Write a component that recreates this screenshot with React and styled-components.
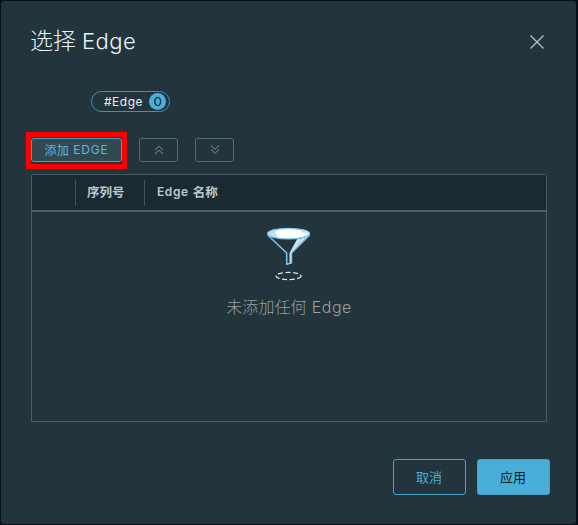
import React from "react";
import styled, { createGlobalStyle } from "styled-components";

const GlobalStyle = createGlobalStyle`
  * { box-sizing: border-box; }
  body {
    margin: 0;
    background: #080f19;
    font-family: Inter, "Noto Sans CJK SC", sans-serif;
  }
  button { font-family: inherit; padding: 0; margin: 0; background: none; border: 0; }
`;

const Backdrop = styled.div`
  height: 525px;
  padding: 1px 2px 1px 1px;
  overflow: hidden;
`;

const Dialog = styled.section`
  height: 523px;
  padding: 24px 27px 0 29px;
  display: flex;
  flex-direction: column;
  background: #22343c;
  border-radius: 3px;
`;

const Header = styled.header`
  display: flex;
  justify-content: space-between;
  height: 66px;
`;

const Title = styled.h1`
  margin: 0;
  display: flex;
  gap: 6px;
  height: 33px;
  font-size: 23px;
  line-height: 33px;
  font-weight: 300;
  color: #eaf4f8;
  white-space: nowrap;
`;

const Latin = styled.span`
  font-size: ${(p) => p.$size}px;
  letter-spacing: ${(p) => p.$spacing || 0}px;
`;

const CloseButton = styled.button`
  width: 24px;
  height: 33px;
  display: grid;
  place-items: center;
  color: #b3c1c9;
`;

const Filter = styled.div`
  margin-left: 61px;
  width: 79px;
  height: 21px;
  padding: 0 3px 0 12px;
  display: flex;
  align-items: center;
  justify-content: space-between;
  border: 1px solid #4092b3;
  border-radius: 11px;
  color: #e6f0f4;
  font-size: 12px;
  letter-spacing: 0.5px;
`;

const FilterLabel = styled.span`
  padding-bottom: 1px;
`;

const Badge = styled.span`
  width: 17px;
  height: 17px;
  border-radius: 50%;
  display: grid;
  place-items: center;
  background: #49afd9;
`;

const BadgeCount = styled.span`
  color: #102029;
  font-size: 12px;
  line-height: 17px;
  letter-spacing: 0;
  transform: scaleX(1.12);
`;

const Toolbar = styled.div`
  display: flex;
  align-items: flex-start;
  height: 37px;
  margin: 20px 0 0 -4px;
`;

const Highlight = styled.div`
  width: 101px;
  height: 37px;
  border: 5px solid #ff0000;
  padding-top: 1px;
`;

const AddButton = styled.button`
  width: 91px;
  height: 24px;
  padding-bottom: 1px;
  display: flex;
  align-items: center;
  justify-content: center;
  gap: 4px;
  border: 1px solid #4a9fc2;
  border-radius: 3px;
  background: #324852;
  color: #57b9e0;
  font-size: 12px;
  letter-spacing: 0.3px;
  white-space: nowrap;
`;

const MoveButton = styled.button`
  width: 39px;
  height: 24px;
  margin: 6px 0 0 ${(p) => p.$gap}px;
  display: grid;
  place-items: center;
  border: 1px solid #566a73;
  border-radius: 3px;
  color: #62757e;
`;

const Grid = styled.div`
  width: 516px;
  height: 248px;
  margin: 5px 0 0 1px;
  border: 1px solid #495b64;
  border-radius: 2px 2px 0 0;
`;

const GridHeader = styled.div`
  display: grid;
  grid-template-columns: 44px 69px 1fr;
  align-items: center;
  height: 37px;
  background: #1b2a32;
  border-bottom: 2px solid #4c5f68;
`;

const HeaderCell = styled.div`
  height: 26px;
  padding: 0 0 2px ${(p) => (p.$last ? 12 : 11)}px;
  display: flex;
  align-items: center;
  gap: 4px;
  border-right: ${(p) => (p.$last ? "0" : "1px solid #43545d")};
  color: #b9c9d1;
  font-size: 12.5px;
  font-weight: 600;
  white-space: nowrap;
`;

const EmptyState = styled.div`
  display: flex;
  flex-direction: column;
  align-items: center;
  padding-top: 15px;
`;

const EmptyText = styled.p`
  display: flex;
  align-items: center;
  gap: 5px;
  height: 24px;
  margin: 14px 0 0;
  line-height: 24px;
  font-size: 16px;
  font-weight: 300;
  letter-spacing: 0.1px;
  color: #9a9fa2;
`;

const Footer = styled.footer`
  display: flex;
  justify-content: flex-end;
  gap: 11px;
  margin: 37px -1px 0 0;
`;

const ActionButton = styled.button`
  width: 73px;
  height: 36px;
  padding: 0 1px 2px 0;
  display: grid;
  place-items: center;
  border: 1px solid #4a9fc2;
  border-radius: 3px;
  background: ${(p) => (p.$primary ? "#49afd9" : "transparent")};
  color: ${(p) => (p.$primary ? "#0b1b24" : "#4aaed9")};
  font-size: 13px;
`;

const CloseIcon = () => (
  <svg width="14" height="14" viewBox="0 0 14 14" fill="none" stroke="currentColor" strokeWidth="1.3">
    <path d="M.5 .5 13.5 13.5M13.5 .5 .5 13.5" />
  </svg>
);

const DoubleChevron = ({ down }) => (
  <svg width="10" height="10" viewBox="0 0 10 10" fill="none" stroke="currentColor" strokeWidth="1.1">
    <path d={down ? "M1 .5 5 4.3 9 .5M1 4.5 5 8.3 9 4.5" : "M1 5 5 1.2 9 5M1 9 5 5.2 9 9"} />
  </svg>
);

const FunnelIcon = () => (
  <svg width="46" height="54" viewBox="0 0 46 54" fill="none">
    <path d="M31 12.3Q39 11 43.5 7.5L25.5 26V35.5L23.5 36.5V26Z" fill="#c5e4f3" />
    <path d="M1.7 8 20.7 26V37.3L25.5 36V26L43.7 8" stroke="#83c6e8" strokeWidth="1.5" />
    <ellipse cx="22.6" cy="6.6" rx="21" ry="5.3" fill="#fff" />
    <path d="M2 6.6C2.5 3.5 8 2 14 1.8L9 5 12 11C6 10 2 9 2 6.6ZM35 2.5 43 6 36 5.5Z" fill="#bfe1f2" />
    <ellipse cx="22.6" cy="6.6" rx="21" ry="5.3" stroke="#83c6e8" strokeWidth="1.3" />
    <ellipse cx="22.6" cy="49" rx="12.5" ry="3.6" stroke="#d9e9f0" strokeWidth="1.2" strokeDasharray="5 2.5" />
  </svg>
);

export default function App() {
  return (
    <Backdrop>
      <GlobalStyle />
      <Dialog role="dialog" aria-label="选择 Edge">
        <Header>
          <Title>选择 <Latin $size={22} $spacing={0.5}>Edge</Latin></Title>
          <CloseButton aria-label="关闭"><CloseIcon /></CloseButton>
        </Header>
        <Filter>
          <FilterLabel>#Edge</FilterLabel>
          <Badge><BadgeCount>0</BadgeCount></Badge>
        </Filter>
        <Toolbar>
          <Highlight>
            <AddButton>添加 <Latin $size={12} $spacing={0.8}>EDGE</Latin></AddButton>
          </Highlight>
          <MoveButton $gap={12} aria-label="上移"><DoubleChevron /></MoveButton>
          <MoveButton $gap={17} aria-label="下移"><DoubleChevron down /></MoveButton>
        </Toolbar>
        <Grid>
          <GridHeader>
            <HeaderCell />
            <HeaderCell>序列号</HeaderCell>
            <HeaderCell $last><Latin $size={12} $spacing={0.6}>Edge</Latin> 名称</HeaderCell>
          </GridHeader>
          <EmptyState>
            <FunnelIcon />
            <EmptyText>未添加任何 <Latin $size={16} $spacing={0.5}>Edge</Latin></EmptyText>
          </EmptyState>
        </Grid>
        <Footer>
          <ActionButton>取消</ActionButton>
          <ActionButton $primary>应用</ActionButton>
        </Footer>
      </Dialog>
    </Backdrop>
  );
}
